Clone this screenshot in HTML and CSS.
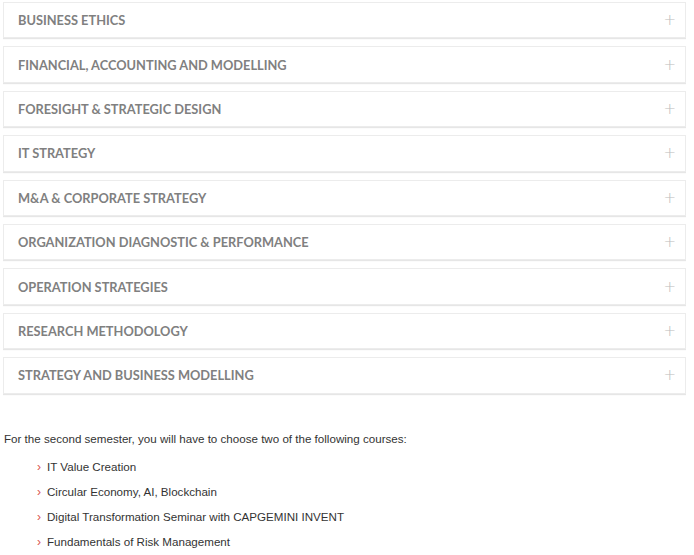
FILE: index.html
```html
<!DOCTYPE html>
<html lang="en">
<head>
    <meta charset="UTF-8">
    <title>Courses</title>
    <link rel="stylesheet" href="styles.css">
</head>
<body>
    <div class="accordion">
        <div class="panel"><span>Business Ethics</span><span class="plus">+</span></div>
        <div class="panel"><span>Financial, Accounting and Modelling</span><span class="plus">+</span></div>
        <div class="panel"><span>Foresight &amp; Strategic Design</span><span class="plus">+</span></div>
        <div class="panel"><span>IT Strategy</span><span class="plus">+</span></div>
        <div class="panel"><span>M&amp;A &amp; Corporate Strategy</span><span class="plus">+</span></div>
        <div class="panel"><span>Organization Diagnostic &amp; Performance</span><span class="plus">+</span></div>
        <div class="panel"><span>Operation Strategies</span><span class="plus">+</span></div>
        <div class="panel"><span>Research Methodology</span><span class="plus">+</span></div>
        <div class="panel"><span>Strategy and Business Modelling</span><span class="plus">+</span></div>
    </div>

    <p class="intro">For the second semester, you will have to choose two of the following courses:</p>
    <ul class="courses">
        <li>IT Value Creation</li>
        <li>Circular Economy, AI, Blockchain</li>
        <li>Digital Transformation Seminar with CAPGEMINI INVENT</li>
        <li>Fundamentals of Risk Management</li>
    </ul>
</body>
</html>
```

FILE: styles.css
```css
body { margin: 2px 8px 0 3px; background: #fff; font-family: "Liberation Sans", Arial, sans-serif; }
.accordion { display: flex; flex-direction: column; gap: 8px; }
.panel {
    display: flex; align-items: center; justify-content: space-between;
    height: 34.4px; padding: 0 9px 0 14px;
    border: 1px solid #ececec;
    box-shadow: 0 1px 1px #e6e6e6;
    font-family: Lato, "Open Sans", sans-serif;
    font-weight: bold; font-size: 12.8px; text-transform: uppercase;
    color: #808080;
}
.plus { font-family: "DejaVu Sans", sans-serif; font-weight: 300; font-size: 15px; color: #bdbdbd; }
.intro { margin: 38px 0 0 1px; font-size: 11.6px; color: #333; }
.courses { list-style: none; margin: 14px 0 0; padding: 0 0 0 34px; font-size: 11.6px; color: #333; }
.courses li { height: 25px; line-height: 15px; }
.courses li::before { content: "\203A"; color: #d9534f; margin-right: 6px; font-size: 12px; }
```
